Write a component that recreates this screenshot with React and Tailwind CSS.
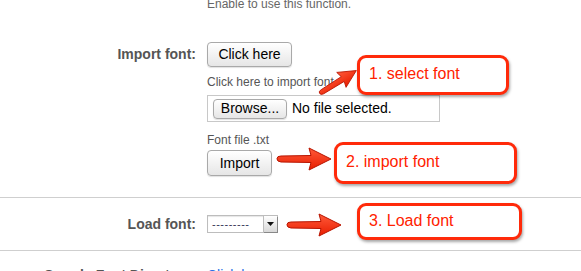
import React from 'react'

// ── Small building blocks ─────────────────────────────────────────────────────
function MacButton({ children, className = '' }) {
  return (
    <div
      className={`flex items-center justify-center rounded-[4px] border border-[#a9a9a9] bg-gradient-to-b from-white to-[#e6e6e6] text-[14px] text-black shadow-[0_1px_1px_rgba(0,0,0,0.12)] ${className}`}
    >
      {children}
    </div>
  )
}

function Arrow({ className = '', width = 60, height = 28 }) {
  return (
    <svg className={className} width={width} height={height} viewBox="0 0 60 28">
      <defs>
        <linearGradient id="arrowFill" x1="0" y1="0" x2="0" y2="1">
          <stop offset="0" stopColor="#ff5a3a" />
          <stop offset="1" stopColor="#e81e00" />
        </linearGradient>
      </defs>
      <path
        d="M3 13.5 Q3 11 7 11 L37 10.5 L35 3 L57 14 L35 25 L37 17.5 L7 17 Q3 16.5 3 14 Z"
        fill="url(#arrowFill)"
        stroke="#b81400"
        strokeWidth="1"
        strokeLinejoin="round"
      />
    </svg>
  )
}

function Callout({ children, className = '' }) {
  return (
    <div
      className={`absolute flex items-center rounded-[9px] border-[3px] border-[#ff2a0a] bg-white pb-[2px] pl-[9px] text-[16px] leading-none text-[#ff2200] shadow-[1px_2px_3px_rgba(0,0,0,0.35)] ${className}`}
    >
      {children}
    </div>
  )
}

export default function App() {
  return (
    <div className="relative h-[271px] w-[581px] overflow-hidden bg-white font-['Liberation_Sans',Arial,sans-serif] text-[#555]">
      {/* ── Previous field help, cut off at top ─────────────────────── */}
      <div className="-mt-[3px] pl-[207px] text-[12px] leading-[15px] text-[#666]">
        Enable to use this function.
      </div>

      {/* ── Import font ─────────────────────────────────────────────── */}
      <div className="mt-[30px] flex items-start">
        <div className="w-[196px] pt-[4px] text-right text-[14px] font-bold leading-[17px] text-[#555]">
          Import font:
        </div>
        <div className="ml-[11px] flex flex-col items-start">
          <MacButton className="h-[25px] w-[85px]">Click here</MacButton>
          <div className="mt-[8px] text-[12px] leading-[15px] text-[#555]">Click here to import font</div>
          <div className="mt-[5px] flex h-[27px] w-[233px] items-center border border-[#c8c8c8] pl-[5px]">
            <MacButton className="h-[20px] w-[74px] text-[13px]">Browse...</MacButton>
            <span className="ml-[5px] text-[14px] text-black">No file selected.</span>
          </div>
          <div className="mt-[11px] text-[12px] leading-[15px] text-[#555]">Font file .txt</div>
          <MacButton className="mt-[2px] h-[26px] w-[65px]">Import</MacButton>
        </div>
      </div>

      {/* ── Load font ───────────────────────────────────────────────── */}
      <div className="mt-[21px] flex h-[54px] items-center border-y border-[#cfcfcf]">
        <div className="w-[196px] pt-[1px] text-right text-[14px] font-bold text-[#555]">Load font:</div>
        <div className="ml-[11px] flex h-[18px] w-[71px] items-stretch border border-[#bdbdbd] shadow-[inset_0_1px_1px_rgba(0,0,0,0.1)]">
          <div className="flex flex-1 items-center pl-[4px] text-[11px] tracking-[0.5px] text-[#335]">---------</div>
          <div className="flex w-[14px] items-center justify-center border-l border-[#bdbdbd] bg-gradient-to-b from-white to-[#d8d8d8] shadow-[1px_1px_0_#888]">
            <svg width="7" height="4" viewBox="0 0 7 4">
              <path d="M0 0 H7 L3.5 4 Z" fill="#111" />
            </svg>
          </div>
        </div>
      </div>

      {/* ── Next row, cut off at bottom ─────────────────────────────── */}
      <div className="mt-[14px] flex">
        <div className="w-[196px] text-right text-[14px] font-bold text-[#555]">Google Font Directory:</div>
        <div className="ml-[11px] text-[14px] text-[#2a6ee6]">Click here</div>
      </div>

      {/* ── Annotations ─────────────────────────────────────────────── */}
      <Arrow className="absolute left-[314px] top-[70px] -rotate-[32deg]" width={48} height={24} />
      <Callout className="left-[357px] top-[55px] h-[40px] w-[152px]">1. select font</Callout>

      <Arrow className="absolute left-[274px] top-[145px]" width={60} height={28} />
      <Callout className="left-[334px] top-[142px] h-[42px] w-[183px]">2. import font</Callout>

      <Arrow className="absolute left-[281px] top-[211px]" width={66} height={28} />
      <Callout className="left-[357px] top-[203px] h-[37px] w-[165px]">3. Load font</Callout>
    </div>
  )
}
